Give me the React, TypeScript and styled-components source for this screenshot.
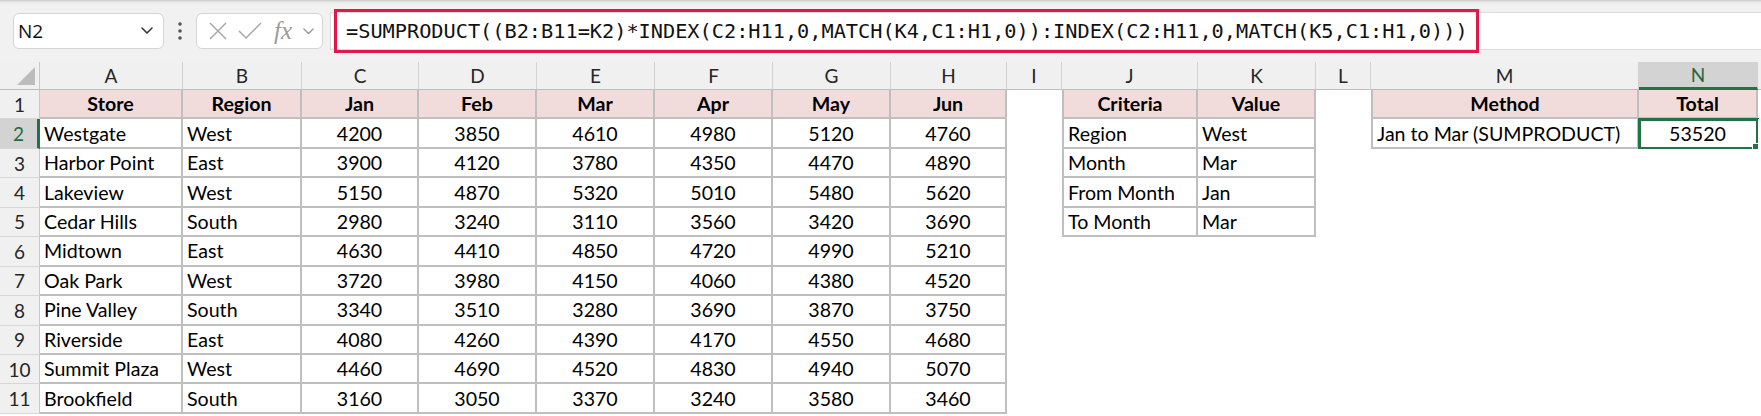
import React from 'react';
import styled, { createGlobalStyle } from 'styled-components';

const GlobalStyle = createGlobalStyle`
  html, body {
    margin: 0;
    padding: 0;
    background: #fff;
    overflow: hidden;
  }
  body {
    font-family: Lato, "Liberation Sans", sans-serif;
    color: #000;
  }
`;

const Page = styled.div`
  width: 1761px;
  height: 416px;
  overflow: hidden;
  background: #fff;
`;

/* ---------- formula bar ---------- */

const Toolbar = styled.div`
  display: flex;
  align-items: center;
  height: 62px;
  padding-left: 13px;
  background: #f1f1f1;
  box-shadow: inset 0 4px 3px -3px rgba(0, 0, 0, 0.2);
  box-sizing: border-box;
`;

const NameBox = styled.div`
  display: flex;
  align-items: center;
  justify-content: space-between;
  width: 151px;
  height: 36px;
  padding: 0 10px 0 4px;
  box-sizing: border-box;
  background: #fff;
  border: 1px solid #d5d5d5;
  border-radius: 6px;
  font-family: "Open Sans", "Liberation Sans", sans-serif;
  font-size: 19px;
  color: #111;
`;

const Dots = styled.div`
  display: flex;
  justify-content: center;
  width: 32px;
`;

const FxBox = styled.div`
  display: flex;
  align-items: center;
  width: 127px;
  height: 36px;
  padding-left: 12px;
  gap: 11px;
  box-sizing: border-box;
  background: #fff;
  border: 1px solid #d5d5d5;
  border-radius: 6px;
`;

const FxLabel = styled.span`
  font-family: "Liberation Serif", serif;
  font-style: italic;
  font-size: 25px;
  color: #9c9c9c;
  margin-left: 1px;
  margin-right: 0;
`;

const FormulaBox = styled.div`
  flex: 1;
  display: flex;
  align-items: center;
  height: 38px;
  margin-left: 7px;
  padding-left: 3px;
  box-sizing: border-box;
  background: #fff;
  border: 1px solid #dcdcdc;
  border-right: none;
`;

const Highlight = styled.div`
  display: flex;
  align-items: center;
  height: 44px;
  padding: 0 8px 0 9px;
  box-sizing: border-box;
  border: 3px solid #e0194b;
  font-family: "DejaVu Sans Mono", "Liberation Mono", monospace;
  font-size: 20.25px;
  color: #111;
  white-space: nowrap;
`;

/* ---------- sheet grid ---------- */

const Sheet = styled.div`
  display: grid;
  grid-template-columns: 40px 143px 119px 117px 118px 118px 118px 118px 116px 55px 136px 118px 55px 268px 119px 1fr;
  grid-template-rows: 28px repeat(11, 29.45px);
`;

const Corner = styled.div`
  position: relative;
  background: #f0f0f0;
  border-right: 1px solid #c8c8c8;
  border-bottom: 1px solid #bdbdbd;

  &::after {
    content: '';
    position: absolute;
    right: 4px;
    bottom: 4px;
    width: 18px;
    height: 18px;
    background: #bcbcbc;
    clip-path: polygon(100% 0, 100% 100%, 0 100%);
  }
`;

const ColHead = styled.div<{ $active?: boolean }>`
  display: flex;
  align-items: center;
  justify-content: center;
  box-sizing: border-box;
  background: ${p => (p.$active ? '#d3d3d3' : '#f0f0f0')};
  color: ${p => (p.$active ? '#1d6b3f' : '#262626')};
  border-right: 1px solid #d2d2d2;
  border-bottom: ${p => (p.$active ? '3px solid #217346' : '1px solid #bdbdbd')};
  font-size: 19px;
`;

const RowHead = styled.div<{ $active?: boolean }>`
  display: flex;
  align-items: center;
  justify-content: center;
  box-sizing: border-box;
  background: ${p => (p.$active ? '#d3d3d3' : '#f0f0f0')};
  color: ${p => (p.$active ? '#1d6b3f' : '#262626')};
  border-right: ${p => (p.$active ? '3px solid #217346' : '1px solid #c8c8c8')};
  border-bottom: 1px solid #d6d6d6;
  font-size: 19px;
`;

const LINE = '2px solid #bfbfbf';

const Cell = styled.div<{ $head?: boolean; $num?: boolean; $edge?: boolean; $blank?: boolean; $selected?: boolean }>`
  position: relative;
  display: flex;
  align-items: center;
  justify-content: ${p => (p.$head || p.$num ? 'center' : 'flex-start')};
  padding: 0 4px;
  box-sizing: border-box;
  white-space: nowrap;
  font-size: 19.6px;
  font-weight: ${p => (p.$head ? 700 : 400)};
  background: ${p => (p.$head ? '#f2dcdb' : '#fff')};
  border-right: ${p => (p.$blank ? 'none' : LINE)};
  border-bottom: ${p => (p.$blank ? 'none' : LINE)};
  border-left: ${p => (p.$edge ? LINE : 'none')};
  ${p =>
    p.$selected &&
    `
    outline: 3px solid #217346;
    outline-offset: -2px;
    &::after {
      content: '';
      position: absolute;
      right: -5px;
      bottom: -5px;
      width: 7px;
      height: 7px;
      background: #217346;
      border: 1px solid #fff;
    }
  `}
`;

const columns = ['A', 'B', 'C', 'D', 'E', 'F', 'G', 'H', 'I', 'J', 'K', 'L', 'M', 'N'];

const stores: [string, string, ...number[]][] = [
  ['Westgate', 'West', 4200, 3850, 4610, 4980, 5120, 4760],
  ['Harbor Point', 'East', 3900, 4120, 3780, 4350, 4470, 4890],
  ['Lakeview', 'West', 5150, 4870, 5320, 5010, 5480, 5620],
  ['Cedar Hills', 'South', 2980, 3240, 3110, 3560, 3420, 3690],
  ['Midtown', 'East', 4630, 4410, 4850, 4720, 4990, 5210],
  ['Oak Park', 'West', 3720, 3980, 4150, 4060, 4380, 4520],
  ['Pine Valley', 'South', 3340, 3510, 3280, 3690, 3870, 3750],
  ['Riverside', 'East', 4080, 4260, 4390, 4170, 4550, 4680],
  ['Summit Plaza', 'West', 4460, 4690, 4520, 4830, 4940, 5070],
  ['Brookfield', 'South', 3160, 3050, 3370, 3240, 3580, 3460],
];

const criteria = [
  ['Region', 'West'],
  ['Month', 'Mar'],
  ['From Month', 'Jan'],
  ['To Month', 'Mar'],
];

const formula =
  '=SUMPRODUCT((B2:B11=K2)*INDEX(C2:H11,0,MATCH(K4,C1:H1,0)):INDEX(C2:H11,0,MATCH(K5,C1:H1,0)))';

const Chevron = ({ size = 12, color = '#333' }: { size?: number; color?: string }) => (
  <svg width={size} height={size * 0.6} viewBox="0 0 12 7" fill="none">
    <path d="M1 1 L6 6 L11 1" stroke={color} strokeWidth="1.5" strokeLinecap="round" strokeLinejoin="round" />
  </svg>
);

const FormulaBar = () => (
  <Toolbar>
    <NameBox>
      N2
      <Chevron />
    </NameBox>
    <Dots>
      <svg width="6" height="20" viewBox="0 0 6 20">
        <circle cx="3" cy="3" r="1.8" fill="#555" />
        <circle cx="3" cy="10" r="1.8" fill="#555" />
        <circle cx="3" cy="17" r="1.8" fill="#555" />
      </svg>
    </Dots>
    <FxBox>
      <svg width="18" height="18" viewBox="0 0 18 18">
        <path d="M1 1 L17 17 M17 1 L1 17" stroke="#a8a8a8" strokeWidth="1.5" />
      </svg>
      <svg width="24" height="18" viewBox="0 0 24 18">
        <path d="M1 9 L8 16 L23 1" stroke="#a8a8a8" strokeWidth="1.5" fill="none" />
      </svg>
      <FxLabel>fx</FxLabel>
      <Chevron size={11} color="#9c9c9c" />
    </FxBox>
    <FormulaBox>
      <Highlight>{formula}</Highlight>
    </FormulaBox>
  </Toolbar>
);

const renderRow = (r: number) => {
  const cells: React.ReactNode[] = [];
  const key = (c: string) => `${c}${r}`;

  cells.push(
    <RowHead key={key('h')} $active={r === 2}>
      {r}
    </RowHead>
  );

  // A..H data table
  if (r === 1) {
    ['Store', 'Region', 'Jan', 'Feb', 'Mar', 'Apr', 'May', 'Jun'].forEach(t =>
      cells.push(
        <Cell key={key(t)} $head>
          {t}
        </Cell>
      )
    );
  } else {
    const row = stores[r - 2];
    row.forEach((v, i) =>
      cells.push(
        <Cell key={key(String(i))} $num={i > 1}>
          {v}
        </Cell>
      )
    );
  }

  // I
  cells.push(<Cell key={key('I')} $blank />);

  // J..K criteria
  if (r === 1) {
    cells.push(
      <Cell key={key('J')} $head $edge>
        Criteria
      </Cell>,
      <Cell key={key('K')} $head>
        Value
      </Cell>
    );
  } else if (r <= 5) {
    const [label, val] = criteria[r - 2];
    cells.push(
      <Cell key={key('J')} $edge>
        {label}
      </Cell>,
      <Cell key={key('K')}>{val}</Cell>
    );
  } else {
    cells.push(<Cell key={key('J')} $blank />, <Cell key={key('K')} $blank />);
  }

  // L
  cells.push(<Cell key={key('L')} $blank />);

  // M..N result
  if (r === 1) {
    cells.push(
      <Cell key={key('M')} $head $edge>
        Method
      </Cell>,
      <Cell key={key('N')} $head>
        Total
      </Cell>
    );
  } else if (r === 2) {
    cells.push(
      <Cell key={key('M')} $edge>
        Jan to Mar (SUMPRODUCT)
      </Cell>,
      <Cell key={key('N')} $num $selected>
        53520
      </Cell>
    );
  } else {
    cells.push(<Cell key={key('M')} $blank />, <Cell key={key('N')} $blank />);
  }

  cells.push(<Cell key={key('z')} $blank />);
  return cells;
};

const App = () => {
  return (
    <Page>
      <GlobalStyle />
      <FormulaBar />
      <Sheet>
        <Corner />
        {columns.map(c => (
          <ColHead key={c} $active={c === 'N'}>
            {c}
          </ColHead>
        ))}
        <ColHead />
        {Array.from({ length: 11 }, (_, i) => renderRow(i + 1))}
      </Sheet>
    </Page>
  );
};

export default App;
